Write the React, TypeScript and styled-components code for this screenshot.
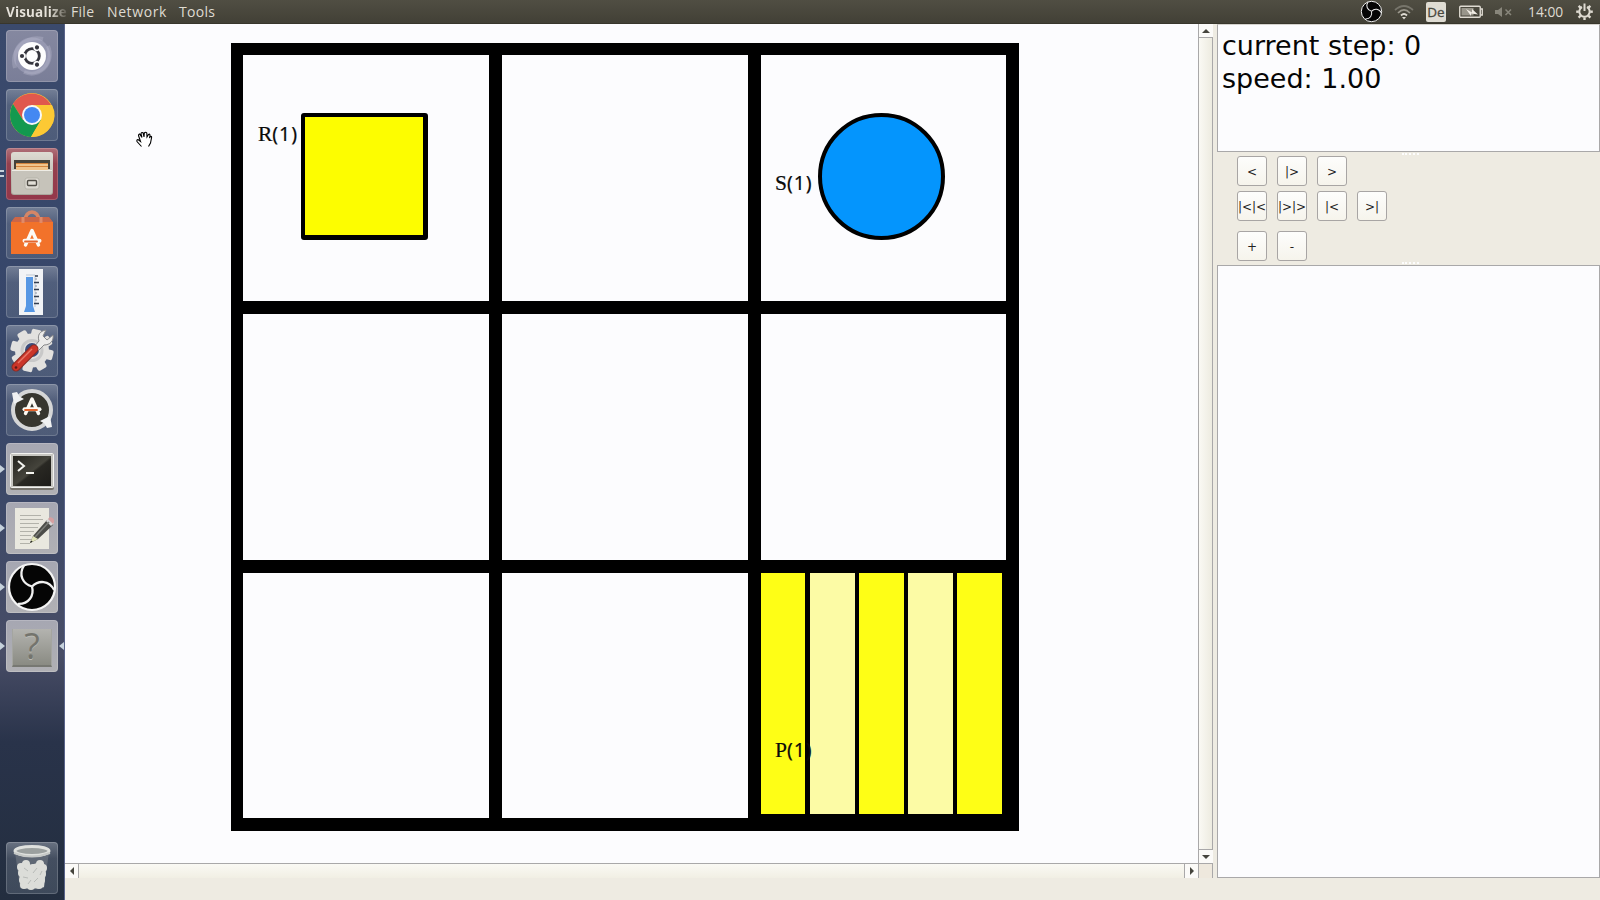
import React from "react";
import styled, { createGlobalStyle } from "styled-components";

const GlobalStyle = createGlobalStyle`
  * { box-sizing: border-box; }
  body { margin: 0; overflow: hidden; }
`;

const LINE = "#a9a8a9";
const PAPER = "#fcfcfe";
const PANEL = "#eeebe2";

const Desktop = styled.div`
  width: 1600px;
  height: 900px;
  display: flex;
  flex-direction: column;
  overflow: hidden;
  background: ${PANEL};
`;

const TopBar = styled.header`
  height: 24px;
  flex: none;
  display: flex;
  align-items: center;
  justify-content: space-between;
  background: linear-gradient(#504e43, #424036);
  border-bottom: 1px solid #38362c;
  color: #dfdbd2;
  font: 14px/22px "Open Sans", "Noto Sans", sans-serif;
`;

const MenuGroup = styled.nav`
  display: flex;
  align-items: center;
  height: 24px;
`;

const AppTitle = styled.span`
  width: 71px;
  padding-left: 6px;
  white-space: nowrap;
  font-weight: 700;
  font-size: 13.5px;
  letter-spacing: 0.15px;
  background: linear-gradient(90deg, #e6e2da 50px, rgba(230, 226, 218, 0.12) 67px);
  background-clip: text;
  -webkit-background-clip: text;
  color: transparent;
`;

const MenuItem = styled.span<{ $width: number; $spacing?: number }>`
  width: ${(p) => p.$width}px;
  letter-spacing: ${(p) => p.$spacing ?? 0}px;
  white-space: nowrap;
`;

const StatusGroup = styled.div`
  display: flex;
  align-items: center;
  height: 24px;
  padding-right: 7px;
  svg { display: block; }
`;

const Language = styled.span`
  width: 20px;
  height: 20px;
  margin: 0 13px 0 12px;
  border-radius: 2px;
  background: #dfdcd3;
  color: #4a483e;
  text-align: center;
  font-size: 13.5px;
  line-height: 20px;
  -webkit-text-stroke: 0.3px #4a483e;
`;

const Clock = styled.span`
  margin: 0 11px 0 16px;
  width: 37px;
  font-size: 13.8px;
  white-space: nowrap;
`;

const Body = styled.div`
  flex: 1;
  display: flex;
  min-height: 0;
`;

const Launcher = styled.aside`
  width: 65px;
  flex: none;
  padding: 6px 0 6px 6px;
  display: flex;
  flex-direction: column;
  gap: 7px;
  border-right: 1px solid #59638a;
  background: linear-gradient(#3b4a6c 0, #36466a 35%, #3d4968 55%, #484d66 72%, #29334a 82%, #232e3f 100%);
`;

const Tile = styled.div<{ $bg: string; $last?: boolean }>`
  position: relative;
  width: 52px;
  height: 52px;
  flex: none;
  margin-top: ${(p) => (p.$last ? "auto" : "0")};
  border-radius: 4px;
  background: ${(p) => p.$bg};
  box-shadow: inset 0 0 0 1px rgba(255, 255, 255, 0.18);
  svg { display: block; }
`;

const Running = styled.i<{ $side: "left" | "right" }>`
  position: absolute;
  top: 22px;
  ${(p) => (p.$side === "left" ? "left: -6px; border-left: 5px solid #c6d2dc;" : "right: -6px; border-right: 5px solid #c6d2dc;")}
  border-top: 4px solid transparent;
  border-bottom: 4px solid transparent;
`;

const WindowCount = styled.i`
  position: absolute;
  left: -6px;
  top: 22px;
  width: 4px;
  height: 7px;
  border-top: 2px solid #c6d2dc;
  border-bottom: 2px solid #c6d2dc;
`;

const Viewer = styled.main`
  width: 1148px;
  height: 854px;
  flex: none;
  display: grid;
  grid-template-columns: 1133px 15px;
  grid-template-rows: 839px 15px;
  border-bottom: 1px solid ${LINE};
`;

const Canvas = styled.section`
  padding: 19px 0 0 166px;
  background: ${PAPER};
`;

const Board = styled.div`
  position: relative;
  width: 788px;
  height: 788px;
  display: grid;
  grid-template-columns: 246px 246px 245px;
  grid-template-rows: 246px 246px 245px;
  gap: 13px;
  padding: 12px 13px 13px 12px;
  background: #000;
`;

const Cell = styled.div`
  position: relative;
  background: ${PAPER};
`;

const Robot = styled.div`
  width: 127px;
  height: 127px;
  margin: 58px 0 0 58px;
  border: solid #000;
  border-width: 4px 5px 5px 4px;
  border-radius: 3px;
  background: #fdfd00;
`;

const Shelf = styled.div`
  width: 127px;
  height: 127px;
  margin: 58px 0 0 57px;
  border: 4px solid #000;
  border-radius: 50%;
  background: #0495fd;
`;

const Station = styled.div`
  width: 245px;
  height: 245px;
  display: flex;
  border: solid #000;
  border-width: 0 4px 4px 0;
  background: #000;
`;

const Stripe = styled.div<{ $pale?: boolean; $width?: number; $gap?: number }>`
  width: ${(p) => p.$width ?? 45}px;
  margin-right: ${(p) => p.$gap ?? 4}px;
  background: ${(p) => (p.$pale ? "#fcfba5" : "#fefe16")};
`;

const Tag = styled.span<{ $x: number; $y: number }>`
  position: absolute;
  left: ${(p) => p.$x}px;
  top: ${(p) => p.$y}px;
  font: 21.5px/24px "Liberation Serif", serif;
  color: #0a0a0a;
  white-space: nowrap;
  -webkit-text-stroke: 0.2px #0a0a0a;
`;

const TagNumber = styled.span`
  font: 19.5px/24px "Noto Sans", sans-serif;
  letter-spacing: 0.9px;
`;

const Scroll = styled.div<{ $vertical?: boolean }>`
  display: flex;
  flex-direction: ${(p) => (p.$vertical ? "column" : "row")};
  justify-content: space-between;
  border: solid ${LINE};
  border-width: ${(p) => (p.$vertical ? "0 1px 0 1px" : "1px 0 0 0")};
  background: ${(p) => (p.$vertical ? "linear-gradient(90deg, #faf9f4, #edebe0)" : "linear-gradient(#faf9f4, #f1efe4)")};
`;

const Stepper = styled.div<{ $edge: "top" | "bottom" | "left" | "right" }>`
  width: 14px;
  height: 14px;
  background: #fbfaf8;
  border-${(p) => p.$edge}: 1px solid ${LINE};
  display: flex;
  align-items: center;
  justify-content: center;
`;

const Corner = styled.div`
  border: solid ${LINE};
  border-width: 1px 1px 0 1px;
  background: #eee8dd;
`;

const Side = styled.aside`
  flex: 1;
  height: 854px;
  display: flex;
  flex-direction: column;
  padding-left: 4px;
`;

const Info = styled.section`
  height: 128px;
  flex: none;
  padding: 4px 0 0 4px;
  border: 1px solid ${LINE};
  border-top-color: #d4d2cd;
  background: ${PAPER};
  color: #050505;
  font: 27px/33px "DejaVu Sans", sans-serif;
`;

const Controls = styled.section`
  position: relative;
  height: 113px;
  flex: none;
  padding: 4px 0 0 20px;
`;

const ButtonRow = styled.div<{ $after: number }>`
  display: flex;
  gap: 10px;
  margin-bottom: ${(p) => p.$after}px;
`;

const PushButton = styled.button`
  width: 30px;
  height: 30px;
  padding: 2px 0 0;
  display: flex;
  align-items: center;
  justify-content: center;
  overflow: hidden;
  border: 1px solid #a8a5a4;
  border-radius: 3px;
  background: linear-gradient(#fdfdfc, #f6f4ec);
  color: #222;
  font: 12px/26px "DejaVu Sans", sans-serif;
  white-space: nowrap;
`;

const Grip = styled.i<{ $top: number }>`
  position: absolute;
  left: 185px;
  top: ${(p) => p.$top}px;
  width: 17px;
  border-top: 2px dotted #fdfdfd;
`;

const Output = styled.section`
  flex: 1;
  border: 1px solid ${LINE};
  background: ${PAPER};
`;

const ObsMark = ({ size }: { size: number }) => (
  <svg width={size} height={size} viewBox="0 0 52 52">
    <circle cx="26" cy="26" r="23" fill="#050505" stroke="#f4f4f4" strokeWidth="2.2" />
    {[0, 120, 240].map((a) => (
      <path key={a} d="M26 25.5C17 23 12 14 18 4.5" transform={`rotate(${a} 26 25.5)`} fill="none" stroke="#f0f0f0" strokeWidth="2.3" />
    ))}
  </svg>
);

const Dash = () => (
  <svg width="52" height="52">
    <circle cx="26" cy="26" r="16" fill="none" stroke="#b4b4cc" strokeWidth="5" opacity=".4" />
    <path d="M9 38C4 20 20 5 37 9M18 42C34 49 49 32 42 16" fill="none" stroke="#c4c4d8" strokeWidth="4" opacity=".3" />
    <circle cx="26" cy="26" r="14" fill="#fdfdfd" />
    <circle cx="26" cy="26" r="7.3" fill="none" stroke="#34343c" strokeWidth="2.8" />
    {[60, 180, 300].map((a) => (
      <g key={a} transform={`rotate(${a} 26 26)`}>
        <circle cx="35.3" cy="26" r="3.2" fill="#fdfdfd" />
        <circle cx="36" cy="26" r="2.1" fill="#34343c" />
      </g>
    ))}
  </svg>
);

const Chrome = () => (
  <svg width="52" height="52">
    <circle cx="26" cy="26" r="22" fill="#fcc934" />
    <path d="M26 16H45A22 22 0 0 0 7 15L17 31Z" fill="#e0584d" />
    <path d="M7 15A22 22 0 0 0 25 48L35 31L26 26L17 31Z" fill="#13994f" />
    <path d="M25 48A22 22 0 0 0 46 16H26L35 31Z" fill="#fcc934" />
    <circle cx="26" cy="26" r="10" fill="#f8f8f8" />
    <circle cx="26" cy="26" r="8" fill="#4488f2" />
  </svg>
);

const Files = () => (
  <svg width="52" height="52">
    <defs>
      <linearGradient id="cab" x2="0" y2="1"><stop stopColor="#dedbd3" /><stop offset="1" stopColor="#aaa69c" /></linearGradient>
    </defs>
    <rect x="5" y="4" width="42" height="43" rx="3" fill="url(#cab)" />
    <path d="M8 21V12H44V21" fill="#46423a" />
    <path d="M10 15H42V22H10Z" fill="#f1c48c" />
    <path d="M10 15.5H42M10 18.5H42" stroke="#d4843d" />
    <rect x="6" y="22" width="40" height="24" rx="2" fill="#c6c3ba" />
    <path d="M6 22.5H46" stroke="#eeece5" />
    <rect x="19" y="30" width="14" height="11" rx="2" fill="#dcd9d1" stroke="#b1aea5" strokeWidth=".8" />
    <rect x="21.5" y="32.5" width="9" height="5" rx="1" fill="#e2dfd7" stroke="#504d46" strokeWidth="1.4" />
  </svg>
);

const ALetter = ({ y = 0 }: { y?: number }) => (
  <g transform={`translate(0 ${y})`} fill="none" stroke="#fcfaf4" strokeLinecap="round">
    <path d="M19.5 38L26 23.5L32.5 38" strokeWidth="3.4" strokeLinejoin="round" />
    <path d="M18.5 33.8H33.5" strokeWidth="4" />
    <path d="M19 34.5H31" stroke="#e3662f" strokeWidth="1.8" />
  </g>
);

const Software = () => (
  <svg width="52" height="52">
    <path d="M19 14C19 2 33 2 33 14" fill="none" stroke="#d48667" strokeWidth="3.5" />
    <path d="M5 15L9 10H43L47 15Z" fill="#cc6647" />
    <rect x="5" y="15" width="42" height="32" fill="#f2722a" />
    <path d="M17 10V16M35 10V16" stroke="#e18a67" strokeWidth="3" />
    <ALetter />
  </svg>
);

const Thermometer = () => (
  <svg width="52" height="52">
    <rect x="13" y="3" width="24" height="46" fill="#f1f3f6" />
    <path d="M20 11H27V40L29 46H18L20 40Z" fill="#5697e4" />
    <path d="M20 9H29V41" fill="none" stroke="#bfc9d4" />
    <path d="M29 10H32M28 16.5H33M28 23.5H33M28 30.5H33M28 37.5H33" stroke="#333e4f" strokeWidth="1.3" />
    <path d="M29 13H31M29 20H31M29 27H31M29 34H31" stroke="#8b93a0" />
  </svg>
);

const Settings = () => (
  <svg width="52" height="52">
    <g fill="#e2e1df">
      {[0, 45, 90, 135].map((a) => (
        <rect key={a} x="21" y="4" width="10" height="43" rx="2" transform={`rotate(${a + 14} 26 25.5)`} />
      ))}
      <circle cx="26" cy="25.5" r="17" />
    </g>
    <circle cx="26" cy="25.5" r="10" fill="none" stroke="#c8c8c8" strokeWidth="3" />
    <circle cx="26" cy="25" r="7" fill="#3c4c7b" />
    <path d="M28 22L33 16C31 10 34 6 40 5L37 11L41 15L47 10C48 16 44 20 38 20L32 26Z" fill="#ecebea" stroke="#868789" />
    <path d="M10 42L28 24" stroke="#862a23" strokeWidth="9" strokeLinecap="round" />
    <path d="M10 42L28 24" stroke="#cb3529" strokeWidth="7" strokeLinecap="round" />
    <path d="M12 38L26 24" stroke="#e77767" strokeWidth="1.5" />
    <circle cx="10" cy="42.5" r="1.3" fill="#5e1915" />
  </svg>
);

const Updater = () => (
  <svg width="52" height="52">
    <circle cx="26" cy="26" r="19" fill="#37362f" stroke="#d5d6d7" strokeWidth="4" />
    <path d="M6 9L8 20L18 15L13.5 12.5L11 8ZM46 43L44 32L34 37L38.5 39.5L41 44Z" fill="#f0f1f2" />
    <ALetter y={-8.5} />
  </svg>
);

const Terminal = () => (
  <svg width="52" height="52">
    <defs>
      <linearGradient id="term" x2="1" y2="1"><stop stopColor="#25241f" /><stop offset=".5" stopColor="#45443c" /><stop offset=".55" stopColor="#292823" /><stop offset="1" stopColor="#1d1c19" /></linearGradient>
    </defs>
    <rect x="4" y="10" width="44" height="37" rx="2" fill="#77746d" />
    <rect x="4.5" y="10.5" width="43" height="34" rx="1" fill="#c7c6c1" stroke="#f2f2f0" />
    <rect x="7" y="13" width="38" height="30" fill="url(#term)" />
    <path d="M12 18L18 23L12 28" fill="none" stroke="#f4f4f0" strokeWidth="2" />
    <path d="M20 30H28" stroke="#f4f4f0" strokeWidth="2" />
  </svg>
);

const Editor = () => (
  <svg width="52" height="52">
    <rect x="9" y="6" width="34" height="41" fill="#e9e8df" />
    <path d="M14 13.5H35M14 17.5H37M14 21.5H33M14 25.5H32M14 29.5H28M14 33.5H25M14 37.5H26M14 41.5H24" stroke="#b2b2aa" />
    <path d="M24 41L27 34L41 18L47 23L32 37Z" fill="#4b4c48" />
    <path d="M24 41L27 34L32 37Z" fill="#e2e5b9" />
    <path d="M24 41L25 38.5L26.7 39.7Z" fill="#222" />
    <path d="M40 19L43 16L48 21L45 24Z" fill="#d7d7d7" />
    <path d="M42 17L44 15Q49 16 48 20L47 22Z" fill="#d5a0a1" />
    <path d="M29 35L43 20" stroke="#7b7d78" strokeWidth="1.5" />
  </svg>
);

const UnknownBox = styled.div`
  padding-top: 9px;
`;

const UnknownGlyph = styled.div`
  width: 40px;
  height: 38px;
  margin-left: 6px;
  border: 1px solid #a4a5a0;
  border-top: 0;
  border-bottom: 2px solid #777872;
  background: linear-gradient(#b3b3af, #8a8b83);
  color: #74746d;
  text-align: center;
  font: 36px/34px "Open Sans", "Noto Sans", sans-serif;
  text-shadow: 0 1px 0 #bbbbb5;
`;

const Trash = () => (
  <svg width="52" height="52">
    <path d="M9 10L14 46Q26 49 38 46L43 10Z" fill="#7c8289" opacity=".5" />
    <g fill="#dcddd9">
      <path d="M12 24L19 19L25 23L31 21L36 19L40 25L38 45Q26 48 15 45Z" />
      {[[15, 25], [20, 22], [27, 26], [34, 22], [37, 26], [16, 31], [36, 32], [17, 38], [35, 38], [18, 43], [25, 44], [33, 43]].map(([x, y]) => (
        <circle key={`${x}-${y}`} cx={x} cy={y} r="4" />
      ))}
    </g>
    <path d="M18 26L22 29M31 26L27 31M17 35L22 36M32 36L28 40M36 29L34 33M22 42L25 38" stroke="#b8bbb8" />
    <ellipse cx="26" cy="9" rx="17" ry="4.5" fill="#9ba09f" stroke="#dfe1de" strokeWidth="3" />
    <path d="M8 11Q26 18 44 11" fill="none" stroke="#c6c9c7" strokeWidth="2" />
  </svg>
);

const GLASS = "linear-gradient(rgba(180,187,198,.48), rgba(140,150,165,.3) 32%, rgba(125,138,155,.3))";
const SILVER = "linear-gradient(#a6a7b2, #b0b0b4)";

type App = { icon: React.ReactNode; bg: string; marks?: React.ReactNode };
const apps: App[] = [
  { icon: <Dash />, bg: "linear-gradient(#8588a0, #7a7e98)" },
  { icon: <Chrome />, bg: GLASS },
  { icon: <Files />, bg: "linear-gradient(#b07079, #94414f 30%, #94374a)", marks: <WindowCount /> },
  { icon: <Software />, bg: GLASS },
  { icon: <Thermometer />, bg: GLASS },
  { icon: <Settings />, bg: GLASS },
  { icon: <Updater />, bg: GLASS },
  { icon: <Terminal />, bg: SILVER, marks: <Running $side="left" /> },
  { icon: <Editor />, bg: SILVER, marks: <Running $side="left" /> },
  { icon: <ObsMark size={52} />, bg: SILVER, marks: <Running $side="left" /> },
  {
    icon: <UnknownBox><UnknownGlyph>?</UnknownGlyph></UnknownBox>,
    bg: SILVER,
    marks: <><Running $side="left" /><Running $side="right" /></>,
  },
];

const Arrow = ({ d }: { d: string }) => (
  <svg width="8" height="8" viewBox="0 0 8 8"><path d={d} fill="#45443d" /></svg>
);

const Wifi = () => (
  <svg width="20" height="16" viewBox="0 0 20 16" fill="none">
    <path d="M1 6Q10-2 19 6" stroke="#77756b" strokeWidth="1.7" />
    <path d="M4 9Q10 3 16 9" stroke="#9b988d" strokeWidth="1.7" />
    <path d="M7 11.5Q10 8.5 13 11.5" stroke="#dfdbd2" strokeWidth="1.8" />
    <path d="M8 13H12L10 15.5Z" fill="#dfdbd2" />
  </svg>
);

const Battery = () => (
  <svg width="24" height="14" viewBox="0 0 24 14">
    <rect x=".75" y="1.25" width="20.5" height="11" rx="1" fill="none" stroke="#dfdbd2" strokeWidth="1.4" />
    <path d="M22 4H23.3V10H22" fill="none" stroke="#dfdbd2" strokeWidth="1.3" />
    <rect x="2.5" y="3" width="12" height="7.5" fill="#99968b" />
    <path d="M7 4L13 7.5V4L19 9.5L12 8.5V11Z" fill="#f0ece4" />
  </svg>
);

const Muted = () => (
  <svg width="17" height="12" viewBox="0 0 17 12">
    <path d="M0 4H3L7 1V11L3 8H0Z" fill="#88867b" />
    <path d="M10.5 3.5L16 9M16 3.5L10.5 9" stroke="#88867b" strokeWidth="1.5" />
  </svg>
);

const Power = () => (
  <svg width="17" height="17" viewBox="0 0 17 17" fill="none" stroke="#dfdbd2">
    <path d="M6 4A5.2 5.2 0 1 0 11 4" strokeWidth="2" />
    <path d="M8.5 .5V8" strokeWidth="2" />
    {[45, 90, 135, 180, 225, 270, 315].map((a) => (
      <path key={a} d="M8.5 .4V3" strokeWidth="2.4" transform={`rotate(${a} 8.5 8.7)`} />
    ))}
  </svg>
);

const HandCursor = styled.svg`
  position: absolute;
  left: 136px;
  top: 131px;
`;

const Spacer = styled.i<{ $width: number }>`
  width: ${(p) => p.$width}px;
`;

const buttonRows: { labels: string[]; after: number }[] = [
  { labels: ["<", "|>", ">"], after: 5 },
  { labels: ["|<|<", "|>|>", "|<", ">|"], after: 10 },
  { labels: ["+", "-"], after: 0 },
];

export default function App() {
  return (
    <Desktop>
      <GlobalStyle />
      <TopBar>
        <MenuGroup>
          <AppTitle>Visualize</AppTitle>
          <MenuItem $width={36} $spacing={0.3}>File</MenuItem>
          <MenuItem $width={72} $spacing={0.6}>Network</MenuItem>
          <MenuItem $width={50} $spacing={0.3}>Tools</MenuItem>
        </MenuGroup>
        <StatusGroup>
          <ObsMark size={23} />
          <Spacer $width={11} />
          <Wifi />
          <Language>De</Language>
          <Battery />
          <Spacer $width={12} />
          <Muted />
          <Clock>14:00</Clock>
          <Power />
        </StatusGroup>
      </TopBar>
      <Body>
        <Launcher>
          {apps.map((app, i) => (
            <Tile key={i} $bg={app.bg}>{app.icon}{app.marks}</Tile>
          ))}
          <Tile $bg={GLASS} $last><Trash /></Tile>
        </Launcher>
        <Viewer>
          <Canvas>
            <Board>
              <Cell>
                <Robot />
                <Tag $x={15} $y={67}>R<TagNumber>(1)</TagNumber></Tag>
              </Cell>
              <Cell />
              <Cell>
                <Shelf />
                <Tag $x={14} $y={116}>S<TagNumber>(1)</TagNumber></Tag>
              </Cell>
              <Cell />
              <Cell />
              <Cell />
              <Cell />
              <Cell />
              <Cell>
                <Station>
                  <Stripe $width={44} $gap={5} />
                  <Stripe $pale />
                  <Stripe />
                  <Stripe $pale />
                  <Stripe $gap={0} />
                </Station>
                <Tag $x={14} $y={165}>P<TagNumber>(1)</TagNumber></Tag>
              </Cell>
            </Board>
          </Canvas>
          <Scroll $vertical>
            <Stepper $edge="bottom"><Arrow d="M0 6L4 2L8 6Z" /></Stepper>
            <Stepper $edge="top"><Arrow d="M0 2L4 6L8 2Z" /></Stepper>
          </Scroll>
          <Scroll>
            <Stepper $edge="right"><Arrow d="M6 0L2 4L6 8Z" /></Stepper>
            <Stepper $edge="left"><Arrow d="M2 0L6 4L2 8Z" /></Stepper>
          </Scroll>
          <Corner />
        </Viewer>
        <Side>
          <Info>
            <div>current step: 0</div>
            <div>speed: 1.00</div>
          </Info>
          <Controls>
            {buttonRows.map((row, i) => (
              <ButtonRow key={i} $after={row.after}>
                {row.labels.map((label) => <PushButton key={label}>{label}</PushButton>)}
              </ButtonRow>
            ))}
            <Grip $top={1} />
            <Grip $top={110} />
          </Controls>
          <Output />
        </Side>
      </Body>
      <HandCursor width="18" height="18" viewBox="0 0 18 18">
        <path
          d="M5.5 15.5L1 10.5Q.5 8.5 2 8.5L4.5 10.5L3 6Q1.8 3.5 3.6 3L6 6.5L5 3Q5 1 7 1.7L8 6L8.3 2Q9.7 .5 10.8 2L11 6L12.5 3.5Q14 2.5 14 4.5L13.5 7L14.5 5.5Q16 5 15.5 7L14.5 12L12.5 15.5"
          fill="#fff"
          stroke="#000"
          strokeWidth="1.1"
        />
      </HandCursor>
    </Desktop>
  );
}
